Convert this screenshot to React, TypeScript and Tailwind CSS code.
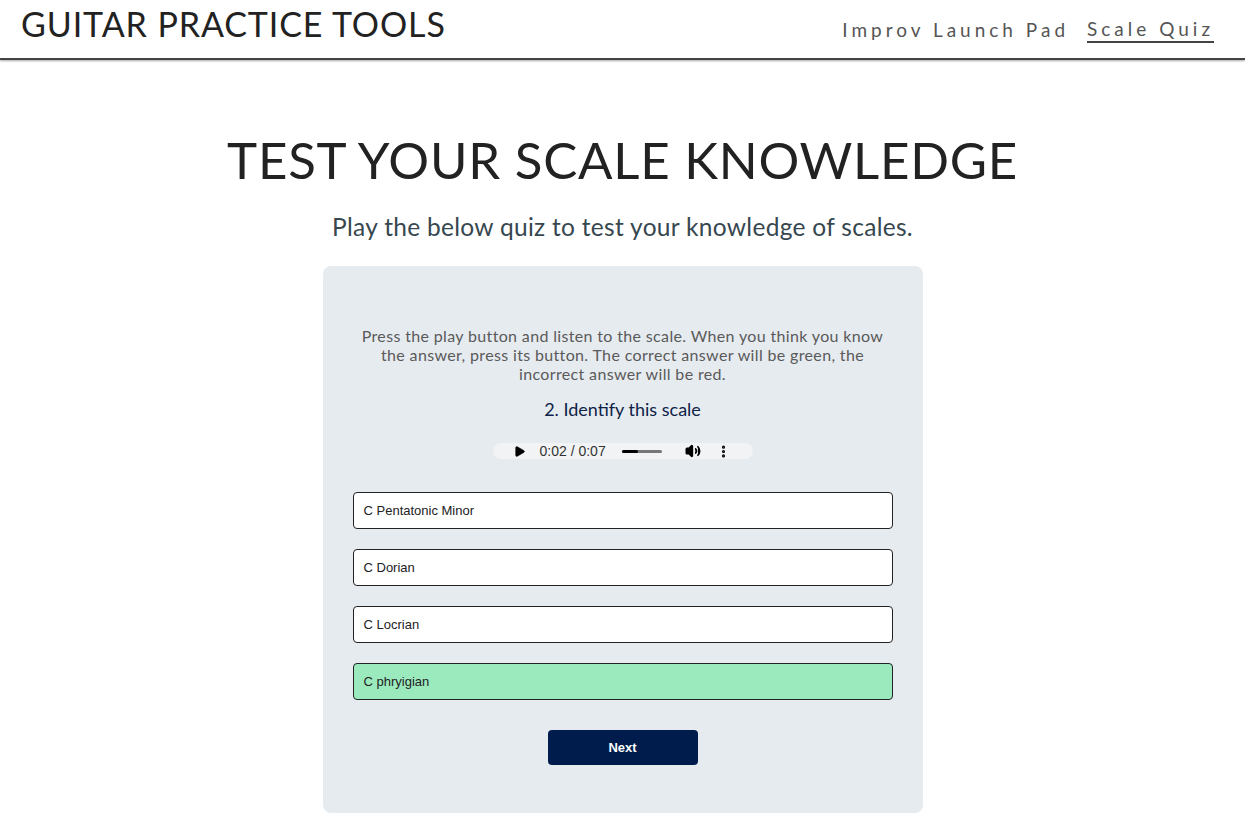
import { Play, Volume2, MoreVertical } from "lucide-react";

const answers = [
  { label: "C Pentatonic Minor", correct: false },
  { label: "C Dorian", correct: false },
  { label: "C Locrian", correct: false },
  { label: "C phryigian", correct: true },
];

function AudioBar() {
  return (
    <div className="mx-auto flex h-[16px] w-[260px] items-center rounded-full bg-[#f1f3f4] pl-[20px] pr-[22px] font-['Liberation_Sans',Arial,sans-serif] text-[14px] text-[#333]">
      <Play className="h-[13px] w-[13px] fill-black text-black" strokeWidth={1} />
      <span className="ml-[14px] leading-none">0:02 / 0:07</span>
      <div className="ml-[16px] flex h-[3px] w-[40px] rounded-full bg-[#777]">
        <div className="h-full w-[16px] rounded-full bg-black" />
      </div>
      <Volume2 className="ml-[23px] h-[16px] w-[16px] fill-black text-black" strokeWidth={2.5} />
      <MoreVertical className="ml-auto h-[15px] w-[15px] text-black" strokeWidth={3} />
    </div>
  );
}

export default function App() {
  return (
    <div className="min-h-screen bg-white font-['Lato',sans-serif]">
      <nav className="flex h-[60px] items-start justify-between border-b-2 border-[#444] pl-[21px] pr-[31px] shadow-[0_1px_2px_rgba(0,0,0,0.35)]">
        <h1 className="mt-[3px] text-[34px] font-normal leading-[42px] tracking-[0.9px] text-[#222]">GUITAR PRACTICE TOOLS</h1>
        <div className="mt-[17px] flex items-center gap-[18px] text-[19px] leading-[24px] tracking-[4px] text-[#555]">
          <a href="#">Improv Launch Pad</a>
          <a href="#" className="border-b-2 border-[#444]">Scale Quiz</a>
        </div>
      </nav>

      <main className="flex flex-col items-center">
        <h2 className="mt-[70px] text-[51px] font-normal leading-[60px] tracking-[0.75px] text-[#222]">
          TEST YOUR SCALE KNOWLEDGE
        </h2>
        <p className="mt-[22px] text-[24.5px] leading-[30px] tracking-[0.3px] text-[#37474f]">
          Play the below quiz to test your knowledge of scales.
        </p>

        <section className="mt-[24px] w-[600px] rounded-[8px] bg-[#e6ebf0] px-[30px] pb-[48px] pt-[60px]">
          <p className="mx-auto w-[540px] text-center text-[16px] font-normal leading-[19px] tracking-[0.35px] text-[#5a5a5a]">
            Press the play button and listen to the scale. When you think you know
            <br />
            the answer, press its button. The correct answer will be green, the
            <br />
            incorrect answer will be red.
          </p>
          <h3 className="mt-[14px] text-center text-[18px] leading-[24px] text-[#0f2347]">2. Identify this scale</h3>
          <div className="mt-[22px]">
            <AudioBar />
          </div>

          <div className="mt-[33px] flex flex-col gap-[20px]">
            {answers.map((a) => (
              <button
                key={a.label}
                className={`h-[37px] w-full rounded-[4px] border border-[#222] pl-[10px] text-left font-['Liberation_Sans',Arial,sans-serif] text-[13px] text-[#222] ${
                  a.correct ? "bg-[#9beabe]" : "bg-white"
                }`}
              >
                {a.label}
              </button>
            ))}
          </div>

          <div className="mt-[30px] flex justify-center">
            <button className="h-[35px] w-[150px] rounded-[4px] bg-[#001c4c] font-['Liberation_Sans',Arial,sans-serif] text-[13px] font-bold text-white">
              Next
            </button>
          </div>
        </section>
      </main>
    </div>
  );
}
